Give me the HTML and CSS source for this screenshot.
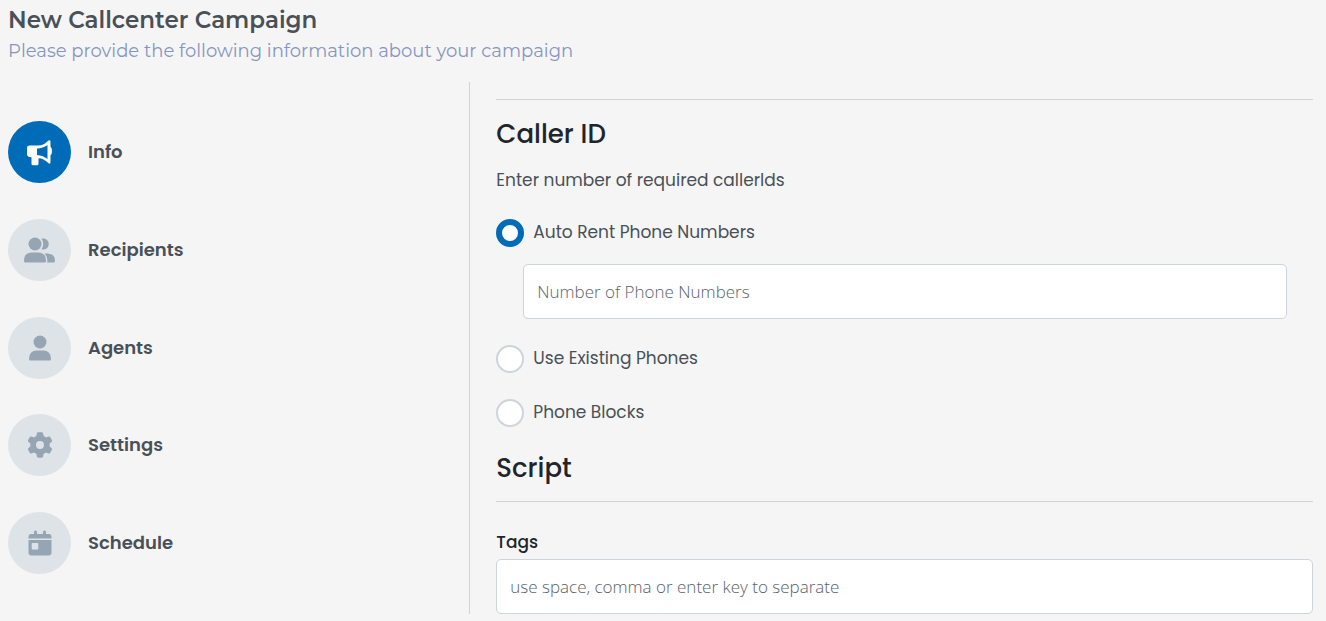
FILE: index.html
```html
<!DOCTYPE html>
<html lang="en">
<head>
  <meta charset="UTF-8">
  <meta name="viewport" content="width=device-width, initial-scale=1">
  <title>New Callcenter Campaign</title>
  <link rel="stylesheet" href="styles.css">
</head>
<body>
  <header class="page-header">
    <h1>New Callcenter Campaign</h1>
    <p>Please provide the following information about your campaign</p>
  </header>

  <div class="wizard">
    <nav class="steps" aria-label="Campaign steps">
      <button type="button" class="step active" aria-current="step">
        <span class="step-icon">
          <svg viewBox="0 0 32 32" aria-hidden="true">
            <path d="M5.500 9.500h8c5 0 8-2 11-5q2-1 2 1v5.200q1.500 1 1.500 4.300t-1.500 4.300v7q0 2-2 1c-3-3-6-5-10-5v5.500q0 1.500-1.500 1.500h-4q-1.500 0-1.500-1.500v-6.500q-4.500 0-4.500-3v-6q0-2.800 2.500-2.800z"/>
            <path class="hole" d="M13 12.600q6-.2 10.500-3.600v14q-4.500-3.500-10.500-4z"/>
          </svg>
        </span>
        <span>Info</span>
      </button>
      <button type="button" class="step">
        <span class="step-icon">
          <svg viewBox="0 0 32 32" aria-hidden="true">
            <circle cx="11" cy="10" r="6.500"/>
            <path d="M17.500 4.800a5.500 5.500 0 1 1 0 10.400q3.500-5.200 0-10.400z"/>
            <path d="M0 27q0-8.500 8-8.500h6q8 0 8 8.500 0 1.500-1.500 1.500h-19Q0 28.500 0 27z"/>
            <path d="M20.500 19.500h3q7.500 0 7.500 7.500 0 1.500-1.500 1.500h-6.300q.8-5.500-2.700-9z"/>
          </svg>
        </span>
        <span>Recipients</span>
      </button>
      <button type="button" class="step">
        <span class="step-icon">
          <svg viewBox="0 0 32 32" aria-hidden="true">
            <circle cx="16" cy="10" r="6.500"/>
            <path d="M5 27q0-8.500 8-8.500h6q8 0 8 8.500 0 1.500-1.500 1.500h-19Q5 28.500 5 27z"/>
          </svg>
        </span>
        <span>Agents</span>
      </button>
      <button type="button" class="step">
        <span class="step-icon">
          <svg viewBox="0 0 512 512" aria-hidden="true">
            <path transform="translate(51 51) scale(.8)" d="M495.900 166.600c3.200 8.700.5 18.400-6.400 24.600l-43.300 39.400c1.100 8.300 1.700 16.800 1.700 25.400s-.6 17.100-1.700 25.400l43.300 39.400c6.900 6.200 9.600 15.900 6.400 24.600-4.400 11.900-9.700 23.300-15.800 34.300l-4.700 8.100c-6.600 11-14 21.400-22.100 31.200-5.900 7.200-15.700 9.600-24.500 6.800l-55.700-17.700c-13.400 10.300-28.200 18.900-44 25.400l-12.500 57.100c-2 9.100-9 16.300-18.200 17.800-13.800 2.300-28 3.500-42.500 3.500s-28.700-1.200-42.500-3.500c-9.200-1.500-16.200-8.700-18.200-17.800l-12.500-57.100c-15.800-6.500-30.600-15.100-44-25.400L83.100 425.900c-8.800 2.800-18.600.3-24.500-6.800-8.100-9.800-15.500-20.200-22.100-31.200l-4.700-8.100c-6.100-11-11.400-22.400-15.800-34.300-3.200-8.700-.5-18.400 6.400-24.600l43.300-39.400C64.600 273.100 64 264.600 64 256s.6-17.100 1.700-25.400L22.400 191.200c-6.900-6.200-9.600-15.900-6.400-24.600 4.400-11.900 9.700-23.300 15.800-34.300l4.700-8.100c6.600-11 14-21.400 22.100-31.200 5.900-7.200 15.700-9.600 24.500-6.800l55.700 17.700c13.400-10.300 28.200-18.900 44-25.400l12.500-57.100c2-9.100 9-16.300 18.200-17.800C227.300 1.200 241.500 0 256 0s28.700 1.200 42.500 3.500c9.200 1.500 16.200 8.700 18.200 17.800l12.500 57.100c15.800 6.500 30.600 15.100 44 25.400l55.700-17.700c8.800-2.800 18.600-.3 24.500 6.800 8.100 9.800 15.500 20.200 22.100 31.200l4.700 8.100c6.100 11 11.400 22.400 15.800 34.300zM256 336a80 80 0 1 0 0-160 80 80 0 1 0 0 160z"/>
          </svg>
        </span>
        <span>Settings</span>
      </button>
      <button type="button" class="step">
        <span class="step-icon">
          <svg viewBox="0 0 32 32" aria-hidden="true">
            <path d="M10 5q0-1.500 1.500-1.500T13 5v2h6V5q0-1.500 1.500-1.500T22 5v2h2.500Q27.500 7 27.500 10v1.500h-23V10q0-3 3-3H10z"/>
            <path fill-rule="evenodd" d="M4.500 13h23v12.500q0 3-3 3h-17q-3 0-3-3zm4 3q-.8 0-.8.8v5q0 .8.800.8h5q.8 0 .8-.8v-5q0-.8-.8-.8z"/>
          </svg>
        </span>
        <span>Schedule</span>
      </button>
    </nav>

    <form class="content">
      <hr>
      <h2>Caller ID</h2>
      <p>Enter number of required callerIds</p>

      <div class="options">
        <div class="option">
          <input type="radio" name="callerId" id="autoRent" checked>
          <label for="autoRent">Auto Rent Phone Numbers</label>
        </div>
        <div class="option-details">
          <input type="text" class="text-input" aria-label="Number of Phone Numbers" placeholder="Number of Phone Numbers">
        </div>
        <div class="option">
          <input type="radio" name="callerId" id="existingPhones">
          <label for="existingPhones">Use Existing Phones</label>
        </div>
        <div class="option">
          <input type="radio" name="callerId" id="phoneBlocks">
          <label for="phoneBlocks">Phone Blocks</label>
        </div>
      </div>

      <h2>Script</h2>
      <hr>

      <label class="field-label" for="tags">Tags</label>
      <input type="text" class="text-input" id="tags" placeholder="use space, comma or enter key to separate">
    </form>
  </div>
</body>
</html>
```

FILE: styles.css
```css
:root {
  --bg: #f5f5f5;
  --text: #495057;
  --heading: #212529;
  --primary: #006bb7;
  --line: #d1d3d6;
  --border: #ced4da;
  --muted: #59626a;
}

* {
  box-sizing: border-box;
}

body {
  margin: 0;
  padding: 6px 0 7px 8px;
  font-family: Poppins, Inter, sans-serif;
  font-size: 17px;
  line-height: 26px;
  background-color: var(--bg);
  color: var(--text);
}

h1, h2, p {
  margin: 0;
}

.page-header {
  font-family: Montserrat, Inter, sans-serif;
  margin-bottom: 19px;
}

.page-header h1 {
  font-size: 23px;
  font-weight: 600;
  line-height: 28px;
}

.page-header p {
  margin-top: 5px;
  font-size: 18px;
  line-height: 24px;
  color: #8796c0;
}

.wizard {
  display: flex;
}

.steps {
  flex: 0 0 calc(35% + 1px);
  display: flex;
  flex-direction: column;
  align-items: flex-start;
  justify-content: space-between;
  gap: 24px;
  padding: 39px 0 40px;
  border-right: 1px solid var(--line);
}

.step {
  display: flex;
  align-items: center;
  gap: 17px;
  padding: 0;
  border: none;
  background: none;
  color: var(--text);
  font: inherit;
  font-size: 18px;
  font-weight: 600;
  cursor: pointer;
}

.step-icon {
  display: flex;
  align-items: center;
  justify-content: center;
  width: 63px;
  height: 62px;
  border-radius: 50%;
  background-color: #dee3e7;
  color: #95a5b3;
}

.step-icon svg {
  width: 32px;
  height: 32px;
  fill: currentColor;
}

.step.active .step-icon {
  background-color: var(--primary);
  color: #fff;
}

.step.active .hole {
  fill: var(--primary);
}

.content {
  flex: 1;
  padding: 17px 13px 0 26px;
}

hr {
  margin: 0;
  border: none;
  border-top: 1px solid var(--line);
}

h2 {
  margin: 16px 0 15px;
  font-size: 26px;
  font-weight: 500;
  line-height: 36px;
  color: var(--heading);
}

.options {
  display: grid;
  gap: 26px;
  margin: 26px 0 23px;
}

.option {
  display: flex;
  gap: 9px;
}

.option input {
  appearance: none;
  width: 28px;
  height: 28px;
  margin: 0;
  border: 2px solid var(--border);
  border-radius: 50%;
  background-color: #fff;
}

.option input:checked {
  border: 6px solid var(--primary);
}

.option-details {
  margin: -9px 26px 0 27px;
}

.text-input {
  display: block;
  width: 100%;
  height: 55px;
  padding: 0 13px;
  border: 1px solid var(--border);
  border-radius: 5px;
  background-color: #fff;
  color: var(--text);
  font-family: "Segoe UI", "Open Sans", sans-serif;
  font-size: 17px;
  font-weight: 300;
}

.text-input::placeholder {
  color: var(--muted);
  opacity: 1;
}

.text-input:focus {
  border-color: var(--primary);
  outline: none;
}

.field-label {
  display: block;
  margin: 27px 0 4px;
  font-weight: 500;
  color: var(--heading);
}
```
